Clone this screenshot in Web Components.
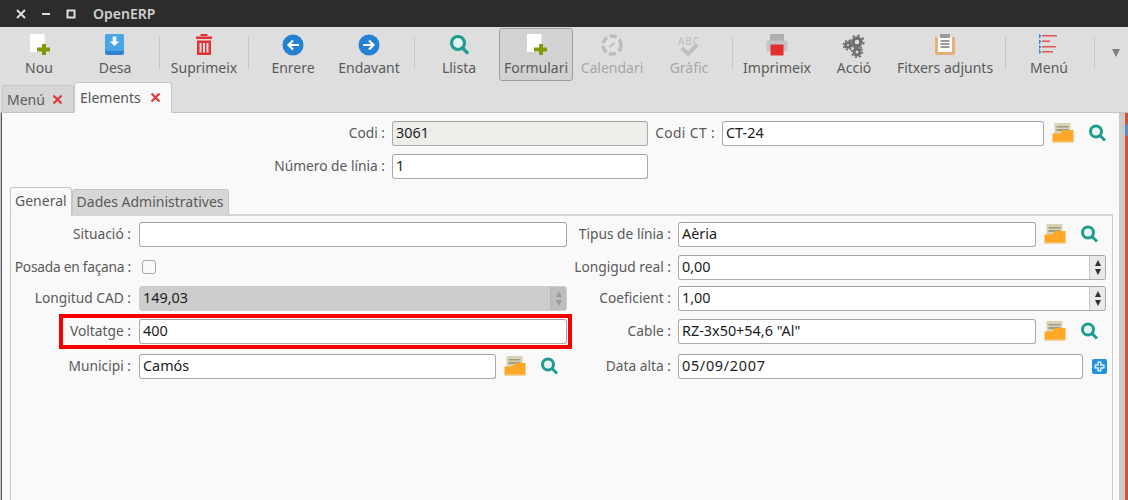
<!DOCTYPE html>
<html>
<head>
<meta charset="utf-8">
<title>OpenERP</title>
<style>
  html, body { margin: 0; height: 100%; overflow: hidden; }
  body { font-family: "Noto Sans", "Open Sans", sans-serif; font-size: 13.75px; color: #5a5a5a; background: #f9f9f9; }
</style>
</head>
<body>
<erp-window>
  <erp-titlebar slot="title">OpenERP</erp-titlebar>
  <erp-toolbar slot="toolbar">
    <tool-button w="74" label="Nou"><erp-icon name="new"></erp-icon></tool-button>
    <tool-button w="78" label="Desa"><erp-icon name="save"></erp-icon></tool-button>
    <tool-sep w="11"></tool-sep>
    <tool-button w="78" label="Suprimeix"><erp-icon name="trash"></erp-icon></tool-button>
    <tool-sep w="10"></tool-sep>
    <tool-button w="80" label="Enrere"><erp-icon name="back"></erp-icon></tool-button>
    <tool-button w="72" label="Endavant"><erp-icon name="forward"></erp-icon></tool-button>
    <tool-sep w="18"></tool-sep>
    <tool-button w="72" label="Llista"><erp-icon name="list"></erp-icon></tool-button>
    <tool-button w="74" label="Formulari" active><erp-icon name="new"></erp-icon></tool-button>
    <tool-button w="78" label="Calendari" disabled><erp-icon name="calendar"></erp-icon></tool-button>
    <tool-button w="76" label="Gràfic" disabled><erp-icon name="graph"></erp-icon></tool-button>
    <tool-sep w="10"></tool-sep>
    <tool-button w="80" label="Imprimeix"><erp-icon name="print"></erp-icon></tool-button>
    <tool-button w="74" label="Acció"><erp-icon name="gears"></erp-icon></tool-button>
    <tool-button w="108" label="Fitxers adjunts"><erp-icon name="clip"></erp-icon></tool-button>
    <tool-sep w="12"></tool-sep>
    <tool-button w="76" label="Menú"><erp-icon name="menu"></erp-icon></tool-button>
    <tool-sep w="14"></tool-sep>
    <more-arrow></more-arrow>
  </erp-toolbar>
  <doc-tabs slot="tabs">
    <doc-tab w="72">Menú</doc-tab>
    <doc-tab w="98" active>Elements</doc-tab>
  </doc-tabs>

  <top-form>
    <field-label>Codi :</field-label>
    <text-field kind="readonly">3061</text-field>
    <field-label style="letter-spacing:.4px">Codi CT :</field-label>
    <lookup-field w="322">CT-24</lookup-field>
    <field-label>Número de línia :</field-label>
    <text-field>1</text-field>
  </top-form>

  <notebook-panel>
    <page-tab slot="tabs" active>General</page-tab>
    <page-tab slot="tabs">Dades Administratives</page-tab>
    <form-grid>
      <field-label wide>Situació :</field-label>
      <text-field></text-field>
      <field-label>Tipus de línia :</field-label>
      <lookup-field>Aèria</lookup-field>

      <field-label wide style="letter-spacing:-.25px">Posada en façana :</field-label>
      <check-box></check-box>
      <field-label>Longigud real :</field-label>
      <text-field spin>0,00</text-field>

      <field-label wide>Longitud CAD :</field-label>
      <text-field kind="disabled" spin>149,03</text-field>
      <field-label>Coeficient :</field-label>
      <text-field spin>1,00</text-field>

      <field-label wide>Voltatge :</field-label>
      <text-field>400</text-field>
      <field-label>Cable :</field-label>
      <lookup-field>RZ-3x50+54,6 "Al"</lookup-field>

      <field-label wide>Municipi :</field-label>
      <lookup-field w="357">Camós</lookup-field>
      <field-label>Data alta :</field-label>
      <date-field>05/09/2007</date-field>

      <red-mark></red-mark>
    </form-grid>
  </notebook-panel>
</erp-window>

<script>
const ICONS = {
  new: `<svg width="24" height="24" viewBox="0 0 24 24"><rect x="3" y="0" width="14.500" height="18" fill="#fff"/><rect x="15" y="10" width="4" height="11" fill="#7f9a0a"/><rect x="10" y="13.500" width="13" height="4" fill="#7f9a0a"/></svg>`,
  save: `<svg width="24" height="24" viewBox="0 0 24 24"><rect x="2" y="0" width="19" height="21" rx="2.500" fill="#2e83cc"/><rect x="2" y="0" width="19" height="17" rx="2.500" fill="#4aa5e6"/><path d="M9.700 2.500h3.600v5h3L11.500 12 6.700 7.500h3z" fill="#fff"/></svg>`,
  trash: `<svg width="24" height="24" viewBox="0 0 24 24"><g fill="#e23232"><rect x="8.500" y="0" width="7" height="2"/><rect x="4" y="2.500" width="16" height="2.500"/><path d="M5 6.500h14V21H5zM7.500 9v9.500h2V9zm3.500 0v9.500h2V9zm3.500 0v9.500h2V9z" fill-rule="evenodd"/></g></svg>`,
  back: `<svg width="24" height="24" viewBox="0 0 24 24"><circle cx="12" cy="11" r="10.500" fill="#2281d1"/><path d="M18 11H8M12 6.500L7.500 11l4.500 4.500" fill="none" stroke="#fff" stroke-width="2.200"/></svg>`,
  forward: `<svg width="24" height="24" viewBox="0 0 24 24"><circle cx="12" cy="11" r="10.500" fill="#2281d1"/><path d="M6 11h10M12 6.500l4.500 4.500-4.500 4.500" fill="none" stroke="#fff" stroke-width="2.200"/></svg>`,
  list: `<svg width="24" height="24" viewBox="0 0 24 24"><circle cx="11" cy="9" r="6.500" fill="#e4f4f2" stroke="#1f9c8f" stroke-width="3.200"/><path d="M15.500 14l5.500 5.500" stroke="#1f9c8f" stroke-width="3.200"/></svg>`,
  calendar: `<svg width="24" height="24" viewBox="0 0 24 24"><circle cx="12" cy="11" r="9" fill="#e2e2e2" stroke="#bdbdbd" stroke-width="3.600" stroke-dasharray="7 3"/><path d="M9.500 13l5-4" stroke="#bdbdbd" stroke-width="2.200"/></svg>`,
  graph: `<svg width="28" height="24" viewBox="0 0 28 24"><text x="14" y="11" text-anchor="middle" font-size="10" letter-spacing="1" font-family="Noto Sans, sans-serif" fill="#bdbdbd">ABC</text><path d="M7 14l6 6 9-9" fill="none" stroke="#bfbfbf" stroke-width="4"/></svg>`,
  print: `<svg width="24" height="24" viewBox="0 0 24 24"><rect x="5" y="0" width="14" height="8" fill="#aeaeae"/><rect x="1.500" y="6.500" width="21" height="11" rx="1.500" fill="#c4c4c4"/><rect x="5.500" y="10.500" width="13" height="11" fill="#e23030"/></svg>`,
  gears: `<svg width="24" height="24" viewBox="0 0 24 24"><g fill="none" stroke="#6f6f6f"><circle cx="15" cy="8" r="4" stroke-width="3.400"/><circle cx="15" cy="8" r="6.700" stroke-width="1.800" stroke-dasharray="2.400 2.900"/><circle cx="6" cy="11" r="2.400" stroke-width="2.800"/><circle cx="6" cy="11" r="4.600" stroke-width="1.600" stroke-dasharray="2 1.600"/><circle cx="15" cy="18" r="3" stroke-width="3"/><circle cx="15" cy="18" r="5.400" stroke-width="1.600" stroke-dasharray="2 2.200"/></g></svg>`,
  clip: `<svg width="24" height="24" viewBox="0 0 24 24"><path d="M2 3h20v16a2 2 0 0 1-2 2H4a2 2 0 0 1-2-2z" fill="#e8ad78"/><rect x="5" y="3" width="14" height="15" fill="#fff"/><rect x="7" y="0" width="10" height="4" fill="#9b9b9b"/><path d="M7.500 7h9M7.500 10h9M7.500 13h9" stroke="#777" stroke-width="1.500"/></svg>`,
  menu: `<svg width="24" height="24" viewBox="0 0 24 24"><g fill="#e25555"><rect x="5" y="1" width="15" height="1.500"/><rect x="5" y="6.500" width="8" height="1.500"/><rect x="5" y="12" width="14" height="1.500"/><rect x="5" y="17" width="11" height="1.500"/></g><g fill="#2b86d6"><path d="M2 0l2.500 2L2 4zM2 5.500l2.500 2L2 9.500zM2 11l2.500 2L2 15zM2 16l2.500 2L2 20z"/></g><path d="M2.700 3v16" stroke="#2b86d6" stroke-width="1" stroke-dasharray="1 2"/></svg>`,
  folder: `<svg width="22" height="20" viewBox="0 0 22 20"><rect x="2.500" y="0" width="16" height="12" fill="#d9d3b4"/><rect x="4.500" y="3" width="12" height="1.500" fill="#9d9d88"/><rect x="4.500" y="6" width="12" height="2" fill="#9d9d88"/><path d="M0.500 10.500h7.500l3-3.500h10.500v12.500H0.500z" fill="#ffa726"/><rect x="0.500" y="18.500" width="21" height="1" fill="#e8d9a8"/></svg>`,
  search: `<svg width="18" height="19" viewBox="0 0 18 19"><circle cx="7" cy="7.500" r="5.500" fill="#e6f5f3" stroke="#1f9c8f" stroke-width="3"/><path d="M11 11.500l5 5" stroke="#1f9c8f" stroke-width="3"/></svg>`,
  plus: `<svg width="15" height="15" viewBox="0 0 15 15"><rect width="15" height="15" rx="2" fill="#2090e0"/><path d="M5.800 2.800h3.400v3h3v3.400h-3v3H5.800v-3h-3V5.800h3z" fill="#e8f4fc" stroke="#fff" stroke-width="0.600"/><path d="M6.800 3.800h1.400v3h3v1.400h-3v3H6.800v-3h-3V6.800h3z" fill="#2090e0"/></svg>`,
  x: `<svg width="11" height="11" viewBox="0 0 11 11"><path d="M1.500 1.500l8 8M9.500 1.500l-8 8" stroke="#e03a3a" stroke-width="2.200"/></svg>`
};

// small helper so every class below stays short
function shadow(el, html) {
  el.attachShadow({ mode: "open" }).innerHTML = html;
}

class ErpIcon extends HTMLElement {
  connectedCallback() {
    if (this.shadowRoot) return;
    shadow(this, `<style>:host{display:inline-flex;line-height:0}</style>${ICONS[this.getAttribute("name")]}`);
  }
}

class ErpWindow extends HTMLElement {
  constructor() {
    super();
    shadow(this, `
      <style>
        :host { display: flex; flex-direction: column; height: 500px; overflow: hidden; }
        .main { flex: 1; display: flex; min-height: 0; }
        .frame { width: 1px; background: #c4c4c4; }
        .frame.dark { background: #555; }
        .content { flex: 1; display: flex; flex-direction: column; min-width: 0; background: #f9f9f9; }
        .strip { width: 6px; background: #cbcbcb; }
        .edge { width: 3px; background: #d9503a; position: relative; }
        .edge i { position: absolute; left: 0; top: 11px; width: 3px; height: 12px; background: #5b8fc4; border-radius: 3px 0 0 3px; }
      </style>
      <slot name="title"></slot>
      <slot name="toolbar"></slot>
      <slot name="tabs"></slot>
      <div class="main">
        <div class="frame"></div><div class="frame dark"></div>
        <div class="content"><slot></slot></div>
        <div class="strip"></div>
        <div class="edge"><i></i></div>
      </div>`);
  }
}

class ErpTitlebar extends HTMLElement {
  constructor() {
    super();
    shadow(this, `
      <style>
        :host { display: flex; align-items: center; height: 27px; background: #2c2c2c; color: #cfcfcf; font-weight: 600; font-size: 14px; flex: none; }
        svg { display: block; flex: none; }
        .btns { display: flex; width: 93px; box-sizing: border-box; padding-left: 16px; gap: 15px; }
      </style>
      <div class="btns">
        <svg width="10" height="10" viewBox="0 0 10 10"><path d="M1 1l8 8M9 1l-8 8" stroke="#ddd" stroke-width="2"/></svg>
        <svg width="10" height="10" viewBox="0 0 10 10"><path d="M1 5h8" stroke="#ddd" stroke-width="2"/></svg>
        <svg width="10" height="10" viewBox="0 0 10 10"><rect x="1.500" y="1.500" width="7" height="7" fill="none" stroke="#ddd" stroke-width="2"/></svg>
      </div>
      <slot></slot>`);
  }
}

class ErpToolbar extends HTMLElement {
  constructor() {
    super();
    shadow(this, `
      <style>
        :host { display: flex; flex: none; height: 55px; box-sizing: border-box; padding: 1px 0 0 2px; background: #dedede; }
      </style>
      <slot></slot>`);
  }
}

class ToolButton extends HTMLElement {
  constructor() {
    super();
    shadow(this, `
      <style>
        :host { display: flex; flex: none; flex-direction: column; align-items: center; box-sizing: border-box; height: 53px; padding-top: 5px; border: 1px solid transparent; border-radius: 3px; color: #5a5a5a; font-size: 14px; }
        :host([active]) { background: #d2d2d2; border-color: #9d9d9d; margin-left: 4px; }
        :host([disabled]) { color: #a6a6a6; }
        .ico { height: 24px; display: flex; }
        .txt { margin-top: 1px; line-height: 18px; white-space: nowrap; }
      </style>
      <div class="ico"><slot></slot></div>
      <div class="txt"></div>`);
  }
  connectedCallback() {
    this.style.width = this.getAttribute("w") + "px";
    this.shadowRoot.querySelector(".txt").textContent = this.getAttribute("label");
  }
}

class ToolSep extends HTMLElement {
  constructor() {
    super();
    shadow(this, `
      <style>
        :host { display: flex; flex: none; justify-content: center; padding-top: 9px; box-sizing: border-box; height: 41px; }
        i { width: 1px; background: #c6c6c6; }
      </style>
      <i></i>`);
  }
  connectedCallback() { this.style.width = this.getAttribute("w") + "px"; }
}

class MoreArrow extends HTMLElement {
  constructor() {
    super();
    shadow(this, `
      <style>:host { display: block; flex: none; margin: 21px 0 0 11px; width: 0; height: 0; border: 4.500px solid transparent; border-top: 8px solid #7d7d7d; border-bottom: 0; }</style>`);
  }
}

class DocTabs extends HTMLElement {
  constructor() {
    super();
    shadow(this, `
      <style>
        :host { display: flex; flex: none; align-items: flex-end; height: 31px; box-sizing: border-box; padding-left: 2px; background: #dedede; border-bottom: 1px solid #c2c2c2; }
      </style>
      <slot></slot>`);
  }
}

class DocTab extends HTMLElement {
  constructor() {
    super();
    shadow(this, `
      <style>
        :host { display: flex; flex: none; align-items: center; justify-content: space-between; box-sizing: border-box; height: 28px; padding: 0 10px 0 4px; margin-bottom: -1px; background: #d6d6d6; border: 1px solid #c6c6c6; border-bottom-color: #c2c2c2; border-radius: 2px 2px 0 0; color: #5a5a5a; font-size: 14px; }
        :host([active]) { height: 31px; background: #f9f9f9; border-bottom-color: #f9f9f9; border-radius: 3px 3px 0 0; padding-left: 5px; color: #555; }
      </style>
      <slot></slot>
      <erp-icon name="x"></erp-icon>`);
  }
  connectedCallback() { this.style.width = this.getAttribute("w") + "px"; }
}

class TopForm extends HTMLElement {
  constructor() {
    super();
    shadow(this, `
      <style>
        :host { display: grid; flex: none; grid-template-columns: 390px 256px 74px 1fr; grid-auto-rows: 33px; padding-top: 8px; }
      </style>
      <slot></slot>`);
  }
}

class FieldLabel extends HTMLElement {
  constructor() {
    super();
    shadow(this, `
      <style>
        :host { display: block; height: 24px; line-height: 24px; text-align: right; padding-right: 7px; white-space: nowrap; color: #5a5a5a; }
        :host([wide]) { padding-right: 8px; }
      </style>
      <slot></slot>`);
  }
}

class TextField extends HTMLElement {
  constructor() {
    super();
    shadow(this, `
      <style>
        :host { display: flex; box-sizing: border-box; height: 25px; background: #fff; border: 1px solid #aaa; border-top-color: #a2a2a2; border-radius: 3px; color: #1c1c1c; font-size: 14.400px; line-height: 22px; overflow: hidden; }
        :host([kind="readonly"]) { background: #efedea; }
        :host([kind="disabled"]) { background: #cdcdcd; border-color: #cdcdcd; }
        .val { flex: 1; padding-left: 3px; white-space: nowrap; overflow: hidden; }
        .spin { display: none; flex: none; width: 15px; flex-direction: column; align-items: center; justify-content: center; gap: 3px; background: #e9e9e9; border-left: 1px solid #c4c4c4; }
        :host([spin]) .spin { display: flex; }
        :host([kind="disabled"]) .spin { background: #bdbdbd; border-left-color: #b4b4b4; }
        .up, .down { width: 0; height: 0; border: 3.500px solid transparent; }
        .up { border-top: 0; border-bottom: 6px solid #2f2f2f; }
        .down { border-bottom: 0; border-top: 6px solid #2f2f2f; }
        :host([kind="disabled"]) .up { border-bottom-color: #9a9a9a; }
        :host([kind="disabled"]) .down { border-top-color: #9a9a9a; }
      </style>
      <div class="val"><slot></slot></div>
      <div class="spin"><div class="up"></div><div class="down"></div></div>`);
  }
}

class LookupField extends HTMLElement {
  constructor() {
    super();
    shadow(this, `
      <style>
        :host { display: flex; align-items: flex-start; }
        text-field { flex: none; width: 358px; }
        erp-icon { margin: 2px 0 0 8px; }
        erp-icon + erp-icon { margin: 3px 0 0 15px; }
      </style>
      <text-field><slot></slot></text-field>
      <erp-icon name="folder"></erp-icon>
      <erp-icon name="search"></erp-icon>`);
  }
  connectedCallback() {
    const w = this.getAttribute("w");
    if (w) this.shadowRoot.querySelector("text-field").style.width = w + "px";
  }
}

class DateField extends HTMLElement {
  constructor() {
    super();
    shadow(this, `
      <style>
        :host { display: flex; align-items: flex-start; }
        text-field { flex: none; width: 405px; letter-spacing: 0.700px; }
        erp-icon { margin: 5px 0 0 9px; }
      </style>
      <text-field><slot></slot></text-field>
      <erp-icon name="plus"></erp-icon>`);
  }
}

class CheckBox extends HTMLElement {
  constructor() {
    super();
    shadow(this, `
      <style>
        :host { display: block; width: 14px; height: 14px; box-sizing: border-box; margin: 5px 0 0 3px; background: #fafafa; border: 1px solid #a8a8a8; border-radius: 3px; }
      </style>`);
  }
}

class NotebookPanel extends HTMLElement {
  constructor() {
    super();
    shadow(this, `
      <style>
        :host { display: flex; flex: 1; flex-direction: column; min-height: 0; margin: 0 6px 0 8px; }
        .tabs { display: flex; align-items: flex-end; flex: none; height: 27px; }
        .body { flex: 1; box-sizing: border-box; padding-top: 6px; background: #f9f9f9; border: 1px solid #c8c8c8; border-top-width: 2px; border-top-color: #d4d4d4; border-bottom: 0; }
      </style>
      <div class="tabs"><slot name="tabs"></slot></div>
      <div class="body"><slot></slot></div>`);
  }
}

class PageTab extends HTMLElement {
  constructor() {
    super();
    shadow(this, `
      <style>
        :host { display: block; flex: none; box-sizing: border-box; height: 25px; line-height: 24px; padding: 0 4px; background: #d6d6d6; border: 1px solid #c6c6c6; border-bottom: 0; border-radius: 3px 3px 0 0; color: #5a5a5a; font-size: 14px; white-space: nowrap; }
        :host([active]) { position: relative; height: 29px; margin-bottom: -2px; line-height: 26px; background: #f9f9f9; }
      </style>
      <slot></slot>`);
  }
}

class FormGrid extends HTMLElement {
  constructor() {
    super();
    shadow(this, `
      <style>
        :host { position: relative; display: grid; grid-template-columns: 128px 428px 111px 428px; grid-template-rows: 33px 31px 33px 35px 24px; }
      </style>
      <slot></slot>`);
  }
}

// red highlight drawn over the Voltatge row
class RedMark extends HTMLElement {
  constructor() {
    super();
    shadow(this, `
      <style>
        :host { position: absolute; left: 48px; top: 92px; width: 513px; height: 35px; box-sizing: border-box; border: 4px solid #f50000; pointer-events: none; }
      </style>`);
  }
}

customElements.define("erp-icon", ErpIcon);
customElements.define("erp-window", ErpWindow);
customElements.define("erp-titlebar", ErpTitlebar);
customElements.define("erp-toolbar", ErpToolbar);
customElements.define("tool-button", ToolButton);
customElements.define("tool-sep", ToolSep);
customElements.define("more-arrow", MoreArrow);
customElements.define("doc-tabs", DocTabs);
customElements.define("doc-tab", DocTab);
customElements.define("top-form", TopForm);
customElements.define("field-label", FieldLabel);
customElements.define("text-field", TextField);
customElements.define("lookup-field", LookupField);
customElements.define("date-field", DateField);
customElements.define("check-box", CheckBox);
customElements.define("notebook-panel", NotebookPanel);
customElements.define("page-tab", PageTab);
customElements.define("form-grid", FormGrid);
customElements.define("red-mark", RedMark);
</script>
</body>
</html>
